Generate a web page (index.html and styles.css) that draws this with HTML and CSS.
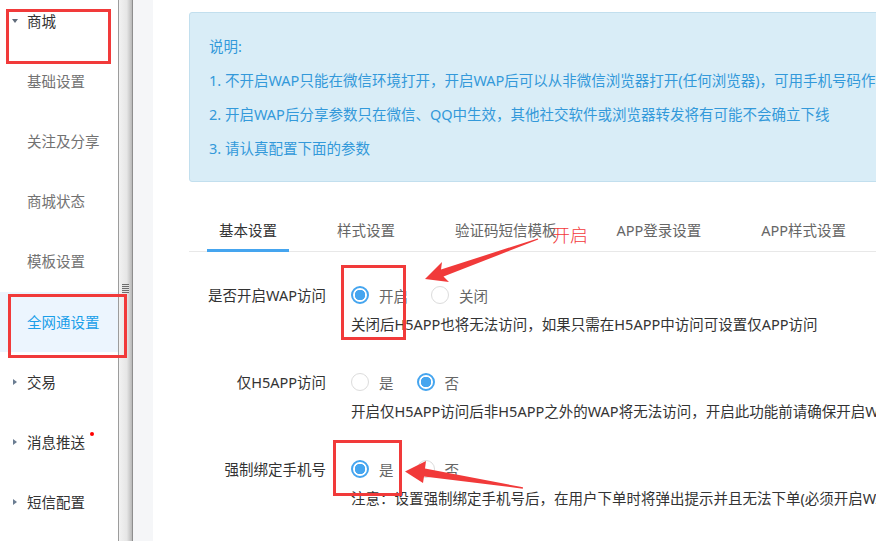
FILE: index.html
```html
<!DOCTYPE html>
<html lang="zh-CN">
<head>
  <meta charset="UTF-8" />
  <title>全网通设置</title>
  <link rel="stylesheet" href="styles.css">
</head>
<body>

  <div class="layout">
    <!-- Left menu -->
    <aside class="sidebar">
      <ul class="menu">
        <li class="menu-group"><span class="caret caret-down"></span>商城</li>
        <li class="menu-item">基础设置</li>
        <li class="menu-item">关注及分享</li>
        <li class="menu-item">商城状态</li>
        <li class="menu-item">模板设置</li>
        <li class="menu-item active">全网通设置</li>
        <li class="menu-group"><span class="caret caret-right"></span>交易</li>
        <li class="menu-group"><span class="caret caret-right"></span>消息推送<i class="dot"></i></li>
        <li class="menu-group"><span class="caret caret-right"></span>短信配置</li>
      </ul>
    </aside>

    <div class="splitter"><span class="grip"></span></div>
    <div class="gutter"></div>

    <!-- Main content -->
    <main class="main">
      <div class="notice">
        <p>说明:</p>
        <p>1. 不开启WAP只能在微信环境打开，开启WAP后可以从非微信浏览器打开(任何浏览器)，可用手机号码作为账号登录</p>
        <p>2. 开启WAP后分享参数只在微信、QQ中生效，其他社交软件或浏览器转发将有可能不会确立下线</p>
        <p>3. 请认真配置下面的参数</p>
      </div>

      <ul class="tabs">
        <li class="tab active">基本设置</li>
        <li class="tab">样式设置</li>
        <li class="tab">验证码短信模板</li>
        <li class="tab">APP登录设置</li>
        <li class="tab">APP样式设置</li>
      </ul>

      <form class="settings">
        <div class="form-row">
          <label class="form-label">是否开启WAP访问</label>
          <div class="form-control">
            <div class="radios">
              <span class="radio checked"><i></i>开启</span>
              <span class="radio"><i></i>关闭</span>
            </div>
            <div class="help">关闭后H5APP也将无法访问，如果只需在H5APP中访问可设置仅APP访问</div>
          </div>
        </div>

        <div class="form-row">
          <label class="form-label">仅H5APP访问</label>
          <div class="form-control">
            <div class="radios">
              <span class="radio"><i></i>是</span>
              <span class="radio checked"><i></i>否</span>
            </div>
            <div class="help">开启仅H5APP访问后非H5APP之外的WAP将无法访问，开启此功能前请确保开启WAP访问</div>
          </div>
        </div>

        <div class="form-row">
          <label class="form-label">强制绑定手机号</label>
          <div class="form-control">
            <div class="radios">
              <span class="radio checked"><i></i>是</span>
              <span class="radio"><i></i>否</span>
            </div>
            <div class="help">注意：设置强制绑定手机号后，在用户下单时将弹出提示并且无法下单(必须开启WAP访问)</div>
          </div>
        </div>
      </form>
    </main>
  </div>

  <!-- Screenshot markup drawn on top -->
  <div class="marks">
    <div class="mark-box box-shop"></div>
    <div class="mark-box box-wap"></div>
    <div class="mark-box box-open"></div>
    <div class="mark-box box-bind"></div>
    <span class="mark-text">开启</span>
    <svg class="mark-arrows" width="876" height="541" viewBox="0 0 876 541">
      <polygon points="425,279 442,262 441,269.5 537.8,238.4 538.2,239.6 443.5,276.5 449,282" />
      <polygon points="405,471.5 426,461 425,468.5 523,487.3 522.8,488.7 424,476.5 423,483" />
    </svg>
  </div>

</body>
</html>
```

FILE: styles.css
```css
* {
  box-sizing: border-box;
}

body {
  margin: 0;
  width: 876px;
  height: 541px;
  overflow: hidden;
  font-family: "Noto Sans", "Noto Sans CJK SC", sans-serif;
  font-size: 14.5px;
  color: #333;
  background: #fff;
  position: relative;
}

ul {
  list-style: none;
  margin: 0;
  padding: 0;
}

.layout {
  display: flex;
  height: 541px;
}

/* --- Sidebar --- */
.sidebar {
  width: 119px;
  flex: none;
  border-right: 1px solid #9c9c9c;
  overflow: hidden;
}

.menu {
  margin-top: -9px;
}

.menu-group,
.menu-item {
  height: 60px;
  line-height: 60px;
  padding-left: 27px;
  position: relative;
  white-space: nowrap;
}

.menu-group {
  color: #333;
}

.menu-item {
  color: #727272;
}

.menu-item.active {
  margin-top: 1px;
  color: #1a9fe9;
  background: #ecf5fe;
}

.caret {
  position: absolute;
  left: 12px;
  top: 50%;
  width: 0;
  height: 0;
}

.caret-down {
  margin-top: -2px;
  border-left: 3px solid transparent;
  border-right: 3px solid transparent;
  border-top: 4px solid #5f6b7a;
}

.caret-right {
  left: 13px;
  margin-top: -3px;
  border-top: 3px solid transparent;
  border-bottom: 3px solid transparent;
  border-left: 4px solid #6b7d92;
}

.dot {
  position: absolute;
  top: 20px;
  left: 90px;
  width: 4px;
  height: 4px;
  border-radius: 50%;
  background: #f00;
}

/* --- Splitter --- */
.splitter {
  width: 14px;
  flex: none;
  border-right: 1px solid #8e8e8e;
  background: linear-gradient(to right, #f2f2f2, #e6e6e6 60%, #c4c4c4 90%, #b8b8b8);
  position: relative;
}

.grip {
  position: absolute;
  left: 3px;
  top: 284px;
  width: 7px;
  height: 9px;
  background: repeating-linear-gradient(to bottom, #6d6d6d 0 1px, #e4e4e4 1px 2px);
}

.gutter {
  width: 20px;
  flex: none;
  background: #f5f6f8;
}

/* --- Main --- */
.main {
  flex: 1;
  padding: 12px 0 0 36px;
  white-space: nowrap;
  overflow: hidden;
}

.notice {
  width: 760px;
  padding: 16px 19px;
  background: #d9edf7;
  border: 1px solid #c2dfee;
  border-radius: 3px;
  color: #3399da;
}

.notice p {
  margin: 0;
  line-height: 34px;
}

.tabs {
  display: flex;
  gap: 36px;
  margin-top: 29px;
  padding-left: 18px;
  border-bottom: 1px solid #e8e8e8;
  width: 760px;
}

.tab {
  padding: 0 12px;
  line-height: 38px;
  height: 41px;
  margin-bottom: -1px;
  color: #666;
  border-bottom: 3px solid transparent;
}

.tab.active {
  color: #333;
  border-bottom-color: #45a5ef;
}

.settings {
  margin-top: 28px;
}

.form-row {
  display: flex;
  margin-bottom: 33px;
}

.form-label {
  width: 137px;
  flex: none;
  text-align: right;
  line-height: 30px;
  color: #333;
}

.form-control {
  margin-left: 25px;
}

.radios {
  display: flex;
  height: 30px;
  align-items: center;
}

.radio {
  display: inline-flex;
  align-items: center;
  margin-right: 23px;
  color: #666;
}

.radio i {
  width: 18px;
  height: 18px;
  border-radius: 50%;
  border: 1px solid #dcdcdc;
  margin-right: 10px;
  background: #fff;
}

.radio.checked i {
  border: 2px solid #45a5ef;
  background: radial-gradient(circle, #45a5ef 0 5px, #fff 5.5px);
}

.help {
  margin-top: 4px;
  line-height: 20px;
  color: #333;
}

/* --- Markup overlay --- */
.marks {
  position: absolute;
  left: 0;
  top: 0;
  width: 876px;
  height: 541px;
  pointer-events: none;
}

.mark-box {
  position: absolute;
  border: 3px solid #f13a3a;
}

.box-shop {
  left: 6px;
  top: 9px;
  width: 105px;
  height: 55px;
}

.box-wap {
  left: 8px;
  top: 294px;
  width: 119px;
  height: 64px;
}

.box-open {
  left: 341px;
  top: 265px;
  width: 65px;
  height: 75px;
}

.box-bind {
  left: 333px;
  top: 440px;
  width: 69px;
  height: 56px;
}

.mark-text {
  position: absolute;
  left: 552px;
  top: 223px;
  font-family: "Noto Sans CJK SC", sans-serif;
  font-size: 18px;
  font-weight: 300;
  line-height: 22px;
  color: #f2393b;
}

.mark-arrows {
  position: absolute;
  left: 0;
  top: 0;
}

.mark-arrows polygon {
  fill: #f13a3a;
}
```
